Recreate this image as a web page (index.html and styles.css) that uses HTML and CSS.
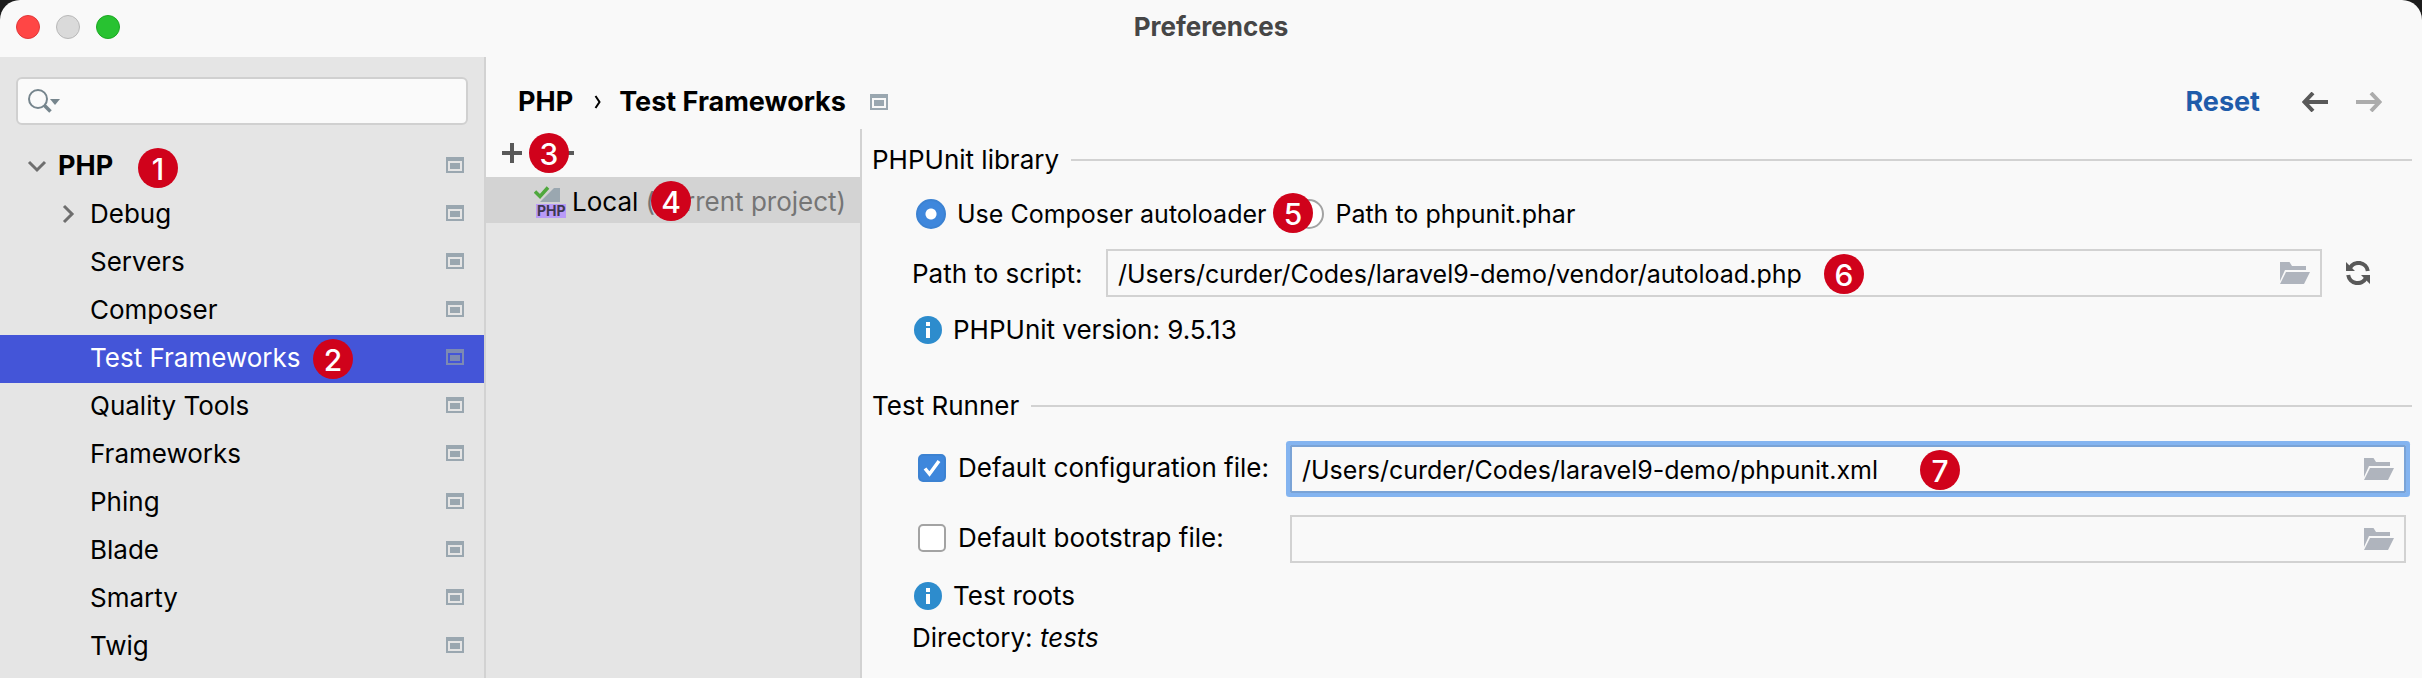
FILE: index.html
```html
<!DOCTYPE html>
<html lang="en">
<head>
<meta charset="utf-8">
<title>Preferences</title>
<link rel="stylesheet" href="styles.css">
</head>
<body>
<svg class="defs" aria-hidden="true">
  <symbol id="window" viewBox="0 0 18 16"><path fill-rule="evenodd" d="M0 0h18v16H0zM2 4v10h14V4zM4 6h10v6H4z"/></symbol>
  <symbol id="folder" viewBox="0 0 30 22"><path d="M0 0h9.500l2.500 4h14v4H5L0 19zM6 10h24l-6 12H0z"/></symbol>
  <symbol id="info" viewBox="0 0 28 28"><circle cx="14" cy="14" r="14" fill="#2d8ccd"/><path fill="#fff" d="M12 6h4v4h-4zM12 12h4v10h-4z"/></symbol>
</svg>
<div class="window">
  <header class="titlebar">
    <div class="lights">
      <button class="light close" aria-label="Close"></button>
      <button class="light minimize" aria-label="Minimize"></button>
      <button class="light zoom" aria-label="Zoom"></button>
    </div>
    <h1 class="title">Preferences</h1>
  </header>
  <div class="body">
    <aside class="sidebar">
      <div class="search">
        <svg class="search-icon" viewBox="0 0 32 24" aria-hidden="true"><circle cx="10" cy="10" r="9" fill="none" stroke="#76858d" stroke-width="2"/><path d="M16.500 16.500l6 6" stroke="#76858d" stroke-width="3.500"/><path d="M22 10h10l-5 6z" fill="#76858d"/></svg>
        <input class="search-input" type="text" aria-label="Search settings">
      </div>
      <nav class="tree">
        <a class="node root" href="#"><svg class="chevron" viewBox="0 0 20 20"><path d="M2 6l8 8 8-8"/></svg>PHP<svg class="scope"><use href="#window"/></svg><span class="badge badge-1">1</span></a>
        <a class="node branch" href="#"><svg class="chevron" viewBox="0 0 20 20"><path d="M6 2l8 8-8 8"/></svg>Debug<svg class="scope"><use href="#window"/></svg></a>
        <a class="node" href="#">Servers<svg class="scope"><use href="#window"/></svg></a>
        <a class="node" href="#">Composer<svg class="scope"><use href="#window"/></svg></a>
        <a class="node selected" href="#">Test Frameworks<svg class="scope"><use href="#window"/></svg><span class="badge badge-2">2</span></a>
        <a class="node" href="#">Quality Tools<svg class="scope"><use href="#window"/></svg></a>
        <a class="node" href="#">Frameworks<svg class="scope"><use href="#window"/></svg></a>
        <a class="node" href="#">Phing<svg class="scope"><use href="#window"/></svg></a>
        <a class="node" href="#">Blade<svg class="scope"><use href="#window"/></svg></a>
        <a class="node" href="#">Smarty<svg class="scope"><use href="#window"/></svg></a>
        <a class="node" href="#">Twig<svg class="scope"><use href="#window"/></svg></a>
      </nav>
    </aside>
    <main class="main">
      <div class="crumbs">
        <span>PHP</span>
        <svg class="crumb-sep" viewBox="0 0 8 14" aria-hidden="true"><path d="M1.500 1l4 6-4 6"/></svg>
        <span>Test Frameworks</span>
        <svg class="scope crumb-scope"><use href="#window"/></svg>
        <button class="reset">Reset</button>
        <button class="nav-arrow" aria-label="Back"><svg viewBox="0 0 26 20"><path d="M26 10H3M11 1L2.500 10 11 19"/></svg></button>
        <button class="nav-arrow disabled" aria-label="Forward"><svg viewBox="0 0 26 20"><path d="M0 10h23M15 1l8.500 9-8.500 9"/></svg></button>
      </div>
      <div class="panes">
        <section class="list">
          <div class="toolbar">
            <button class="tool" aria-label="Add"><svg viewBox="0 0 20 20"><path d="M0 10h20M10 0v20"/></svg></button>
            <button class="tool" aria-label="Remove"><svg viewBox="0 0 20 20"><path d="M0 10h20"/></svg></button>
            <span class="badge badge-3">3</span>
          </div>
          <div class="entry">
            <svg class="php-icon" viewBox="0 0 32 32" aria-hidden="true"><path d="M26 2v14H6L20 2z" fill="#9aa7b0"/><path d="M1 5.500l5 5L14 1.500" fill="none" stroke="#4fa83d" stroke-width="3.500"/><path d="M2 18h30v14H2z" fill="#b99bf8"/><text x="3" y="30" class="php-label">PHP</text></svg>
            <span>Local <span class="muted">(current project)</span></span>
            <span class="badge badge-4">4</span>
          </div>
        </section>
        <form class="form">
          <div class="section"><h2>PHPUnit library</h2></div>
          <div class="row radios">
            <label class="choice"><input class="radio" type="radio" name="lib" checked>Use Composer autoloader</label>
            <label class="choice"><input class="radio" type="radio" name="lib">Path to phpunit.phar</label>
            <span class="badge badge-5">5</span>
          </div>
          <div class="row script">
            <label class="script-label" for="script">Path to script:</label>
            <div class="field"><input id="script" type="text" value="/Users/curder/Codes/laravel9-demo/vendor/autoload.php"><button type="button" class="browse" aria-label="Browse"><svg><use href="#folder"/></svg></button><span class="badge badge-6">6</span></div>
            <button type="button" class="refresh" aria-label="Refresh"><svg viewBox="0 0 24 24"><path class="arc" d="M4 7A9.500 9.500 0 0 1 21.800 10M20 17A9.500 9.500 0 0 1 2.200 14"/><path d="M0 1v9h9zM24 23v-9h-9z"/></svg></button>
          </div>
          <div class="row note"><svg class="info"><use href="#info"/></svg>PHPUnit version: 9.5.13</div>
          <div class="section runner"><h2>Test Runner</h2></div>
          <div class="files">
            <label class="choice"><input class="check" type="checkbox" checked>Default configuration file:</label>
            <div class="field focused"><input type="text" aria-label="Default configuration file path" value="/Users/curder/Codes/laravel9-demo/phpunit.xml"><button type="button" class="browse" aria-label="Browse"><svg><use href="#folder"/></svg></button><span class="badge badge-7">7</span></div>
            <label class="choice"><input class="check" type="checkbox">Default bootstrap file:</label>
            <div class="field"><input type="text" aria-label="Default bootstrap file path"><button type="button" class="browse" aria-label="Browse"><svg><use href="#folder"/></svg></button></div>
          </div>
          <div class="row roots"><svg class="info"><use href="#info"/></svg>Test roots</div>
          <div class="row directory"><span>Directory: <em>tests</em></span></div>
        </form>
      </div>
    </main>
  </div>
</div>
</body>
</html>
```
FILE: styles.css
```css
* { box-sizing: border-box; }
body { margin: 0; background: #1c1c1c; color: #000; font: 26px/32px Inter, "Liberation Sans", sans-serif; }
button, input { font: inherit; color: inherit; margin: 0; padding: 0; border: 0; background: none; }
svg { display: block; flex: none; }
h1, h2 { margin: 0; font-size: 26px; }
.defs { position: absolute; width: 0; height: 0; }

.window { display: flex; flex-direction: column; min-height: 100vh; background: #f9f9f9; border-radius: 20px 20px 0 0; overflow: hidden; }
.titlebar { display: grid; grid-template-columns: 1fr auto 1fr; align-items: center; height: 57px; padding: 0 16px 4px; }
.lights { display: flex; gap: 16px; }
.light { width: 24px; height: 24px; border-radius: 50%; border: 1px solid #e0383a; background: #ff4645; }
.minimize { border-color: #b8b8b8; background: #dadada; }
.zoom { border-color: #1ca823; background: #28c231; }
.title { color: #464646; font-weight: 700; }
.body { display: flex; flex: 1; }

.sidebar { width: 486px; flex: none; padding-top: 20px; background: #e5e5e5; border-right: 2px solid #d2d2d2; }
.search { display: flex; align-items: center; gap: 8px; height: 48px; margin: 0 16px 18px; padding: 0 10px; border: 2px solid #d0d0d0; border-radius: 6px; background: #fafafa; }
.search-icon { width: 32px; height: 24px; }
.search-input { flex: 1; min-width: 0; outline: 0; }
.node { position: relative; display: flex; align-items: center; height: 48px; padding: 0 20px 2px 90px; color: #000; text-decoration: none; }
.root { padding-left: 27px; gap: 11px; font-size: 27px; font-weight: 700; }
.branch { padding-left: 58px; gap: 12px; }
.selected { background: #4455d8; color: #fff; }
.chevron { width: 20px; height: 20px; fill: none; stroke: #6e6e6e; stroke-width: 3; }
.scope { width: 18px; height: 16px; margin-left: auto; margin-bottom: 2px; fill: #9aa7b0; }
.selected .scope { fill: #7d8ab2; }

.badge { position: absolute; width: 40px; height: 40px; border-radius: 50%; background: #d0021b; color: #fff; font-size: 30px; font-weight: 500; line-height: 42px; text-align: center; }
.badge-1 { left: 138px; top: 5px; }
.badge-2 { left: 313px; top: 4px; }
.badge-3 { left: 43px; top: 4px; }
.badge-4 { left: 165px; top: 4px; }
.badge-5 { left: 401px; top: 0; }
.badge-6 { left: 716px; top: 3px; }
.badge-7 { left: 628px; top: 3px; }

.main { display: flex; flex-direction: column; flex: 1; min-width: 0; }
.crumbs { display: flex; align-items: center; height: 72px; padding: 18px 40px 0 32px; font-size: 27px; font-weight: 700; }
.crumb-sep { width: 8px; height: 14px; margin: 0 17px 0 21px; fill: none; stroke: #000; stroke-width: 2; }
.crumb-scope { margin: 0 0 0 24px; }
.reset { margin-left: auto; margin-right: 42px; color: #1f5caa; font-weight: 700; }
.nav-arrow { width: 26px; height: 20px; margin-right: 28px; }
.nav-arrow svg { width: 26px; height: 20px; fill: none; stroke: #595959; stroke-width: 4; }
.disabled { margin-right: 0; }
.disabled svg { stroke: #acacac; }
.panes { display: flex; flex: 1; }
.list { width: 376px; flex: none; border-right: 2px solid #d2d2d2; background: #e5e5e5; }
.toolbar { position: relative; display: flex; align-items: center; gap: 32px; height: 48px; padding: 0 16px; background: #f9f9f9; }
.tool svg { width: 20px; height: 20px; stroke: #595959; stroke-width: 4; }
.entry { position: relative; display: flex; align-items: center; gap: 6px; height: 46px; padding: 3px 0 0 48px; background: #d3d3d3; white-space: nowrap; }
.php-icon { width: 32px; height: 32px; }
.php-label { font-size: 14px; font-weight: 700; fill: #3e3850; }
.muted { color: #757575; }

.form { flex: 1; min-width: 0; padding: 15px 10px 0; }
.section { display: flex; align-items: center; gap: 12px; }
.section::after { content: ""; flex: 1; height: 2px; background: #d2d2d2; }
.section h2 { font-weight: 400; }
.row { position: relative; display: flex; align-items: center; }
.radios { height: 42px; margin-top: 17px; padding-left: 44px; gap: 28px; font-size: 25px; }
.choice { display: flex; align-items: center; gap: 11px; white-space: nowrap; }
.radio, .check { appearance: none; flex: none; border: 2px solid #a3a3a3; background: #fff; }
.radio { width: 30px; height: 30px; border-radius: 50%; }
.radio:checked { border-color: #3c82d2; background: radial-gradient(circle, #fff 5px, #3f87dc 6px); }
.check { width: 28px; height: 28px; border-radius: 5px; }
.check:checked { border-color: #3c82d2; background: #3f87dc url("data:image/svg+xml,%3Csvg xmlns='http://www.w3.org/2000/svg' viewBox='0 0 24 24'%3E%3Cpath d='M5 12.500l4.500 5.500L19 5' fill='none' stroke='%23fff' stroke-width='3.500'/%3E%3C/svg%3E") center / 24px 24px no-repeat; }
.script { height: 48px; margin-top: 14px; padding-left: 40px; }
.script-label { width: 194px; flex: none; padding-top: 2px; }
.field { position: relative; display: flex; align-items: center; flex: 1; min-width: 0; height: 48px; padding: 0 10px; border: 2px solid #d2d2d2; }
.field input { flex: 1; min-width: 0; padding-top: 2px; outline: 0; font-size: 25px; }
.focused { border-color: #7aa3d6; box-shadow: 0 0 0 4px #84b4f0; border-radius: 1px; }
.browse svg { width: 30px; height: 22px; fill: #afb4bd; }
.refresh { margin: 0 42px 0 24px; }
.refresh svg { width: 24px; height: 24px; fill: #595959; }
.arc { fill: none; stroke: #595959; stroke-width: 4; }
.note, .roots { gap: 11px; padding-left: 42px; }
.note { margin-top: 17px; }
.info { width: 28px; height: 28px; }
.runner { margin-top: 44px; }
.files { display: grid; grid-template-columns: 350px 1fr; gap: 22px; margin-top: 23px; padding: 0 6px 0 46px; }
.files .choice { gap: 12px; padding-bottom: 3px; }
.roots { margin-top: 17px; }
.directory { margin-top: 10px; padding-left: 40px; }
```
